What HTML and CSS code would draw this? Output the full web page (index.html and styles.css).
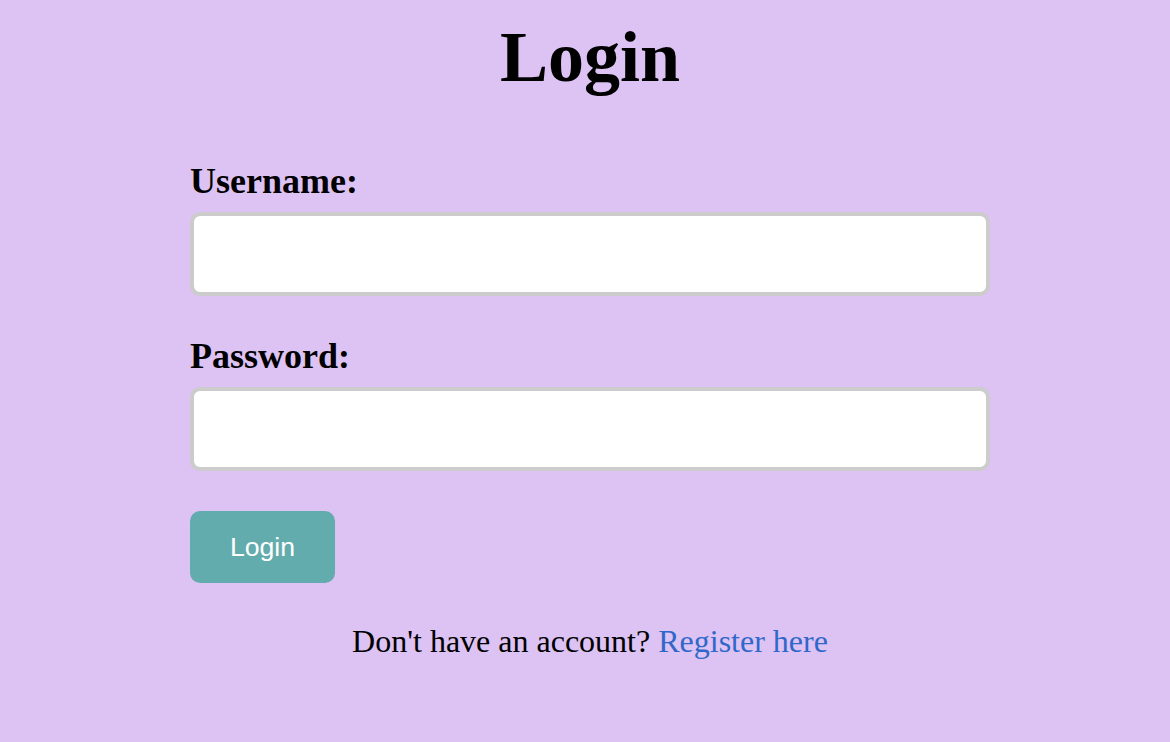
FILE: index.html
```html
<!DOCTYPE html>
<html lang="en">
<head>
<meta charset="utf-8">
<title>Login</title>
<link rel="stylesheet" href="styles.css">
</head>
<body>
<div class="page">
  <main class="container">
    <h1 class="title">Login</h1>
    <form class="form">
      <label class="label" for="username">Username:</label>
      <input class="input" type="text" id="username" name="username">
      <label class="label" for="password">Password:</label>
      <input class="input" type="password" id="password" name="password">
      <button class="btn" type="submit">Login</button>
    </form>
    <p class="footer">Don't have an account? <a class="link" href="#">Register here</a></p>
  </main>
</div>
</body>
</html>
```

FILE: styles.css
```css
html, body {
  margin: 0;
  padding: 0;
  background: #ddc2f4;
  height: 100%;
}

body {
  font-family: "Liberation Serif", "Times New Roman", serif;
  color: #000;
}

.page {
  padding: 17px 0 0 10px;
}

.container {
  width: 800px;
  margin: 0 auto;
  display: flex;
  flex-direction: column;
}

.title {
  margin: 0;
  font-size: 72px;
  line-height: 80px;
  font-weight: bold;
  text-align: center;
  height: 80px;
}

.form {
  display: flex;
  flex-direction: column;
  align-items: flex-start;
  margin-top: 64px;
}

.label {
  display: block;
  font-size: 36px;
  line-height: 40px;
  font-weight: bold;
  margin-bottom: 11px;
}

.input {
  box-sizing: border-box;
  width: 800px;
  height: 84px;
  border: 4px solid #cccccc;
  border-radius: 10px;
  background: #fff;
  padding: 0 20px;
  margin: 0 0 40px 0;
  font-size: 28px;
  outline: none;
}

.btn {
  box-sizing: border-box;
  height: 72px;
  width: 145px;
  padding: 0;
  border: none;
  border-radius: 10px;
  background: #63acad;
  color: #fff;
  font-family: "Liberation Sans", Arial, sans-serif;
  font-size: 26.67px;
  cursor: pointer;
}

.footer {
  margin: 40px 0 0 0;
  font-size: 32px;
  line-height: 36px;
  text-align: center;
}

.link {
  color: #3068c9;
  text-decoration: none;
}
```
